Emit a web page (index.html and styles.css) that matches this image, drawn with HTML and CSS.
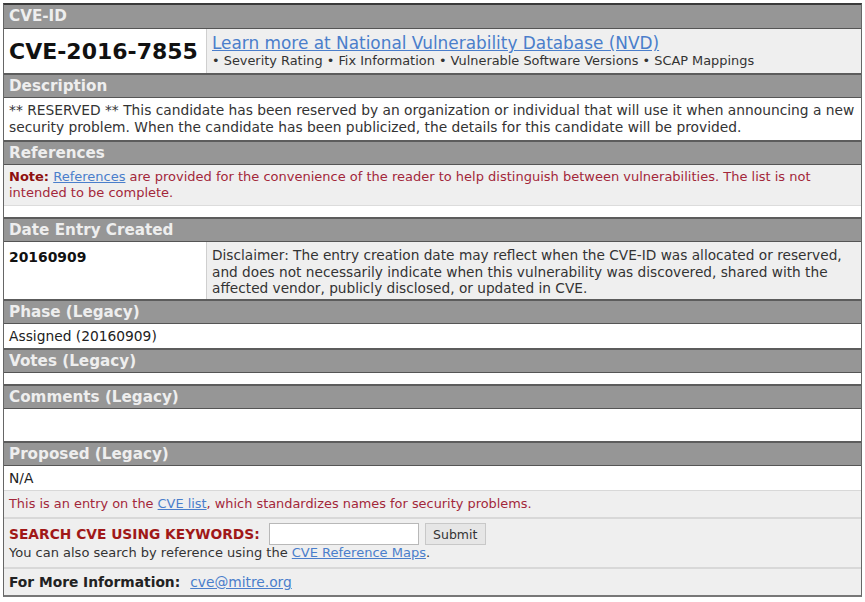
FILE: index.html
```html
<!DOCTYPE html>
<html>
<head>
<meta charset="utf-8">
<title>CVE-2016-7855</title>
<link rel="stylesheet" href="styles.css">
</head>
<body>
<div class="box">
  <div class="hdr first">CVE-ID</div>
  <div class="split idrow">
    <div class="cell-l white"><span class="cveid">CVE-2016-7855</span></div>
    <div class="cell-r gray">
      <a class="nvd" href="#">Learn more at National Vulnerability Database (NVD)</a>
      <div class="bullets">• Severity Rating • Fix Information • Vulnerable Software Versions • SCAP Mappings</div>
    </div>
  </div>

  <div class="hdr">Description</div>
  <div class="body white desc">** RESERVED ** This candidate has been reserved by an organization or individual that will use it when announcing a new security problem. When the candidate has been publicized, the details for this candidate will be provided.</div>

  <div class="hdr">References</div>
  <div class="body gray note"><b>Note:</b> <a href="#">References</a> are provided for the convenience of the reader to help distinguish between vulnerabilities. The list is not intended to be complete.</div>
  <div class="spacer white"></div>

  <div class="hdr">Date Entry Created</div>
  <div class="split daterow">
    <div class="cell-l white"><b class="date">20160909</b></div>
    <div class="cell-r gray disclaimer">Disclaimer: The entry creation date may reflect when the CVE-ID was allocated or reserved, and does not necessarily indicate when this vulnerability was discovered, shared with the affected vendor, publicly disclosed, or updated in CVE.</div>
  </div>

  <div class="hdr">Phase (Legacy)</div>
  <div class="body white line">Assigned (20160909)</div>

  <div class="hdr">Votes (Legacy)</div>
  <div class="blank-s white"></div>

  <div class="hdr">Comments (Legacy)</div>
  <div class="blank-l white"></div>

  <div class="hdr">Proposed (Legacy)</div>
  <div class="body white line">N/A</div>

  <div class="body gray foot-note">This is an entry on the <a href="#">CVE list</a>, which standardizes names for security problems.</div>

  <div class="body gray search">
    <div class="search-row">
      <span class="search-label">SEARCH CVE USING KEYWORDS:</span>
      <input class="search-input" type="text">
      <button class="submit" type="button">Submit</button>
    </div>
    <div class="search-sub">You can also search by reference using the <a href="#">CVE Reference Maps</a>.</div>
  </div>

  <div class="body gray more"><b>For More Information:</b><a class="mail" href="#">cve@mitre.org</a></div>
</div>
</body>
</html>
```

FILE: styles.css
```css
html, body {
  margin: 0;
  padding: 0;
  background: #ffffff;
}
body {
  padding: 3px 3px 0 3px;
  font-family: "DejaVu Sans", Verdana, sans-serif;
  color: #222;
}
* { box-sizing: border-box; }
a {
  color: #4a7ecb;
  text-decoration: underline;
}
.box {
  width: 859px;
  border: 1px solid #666;
  border-top: 2px solid #3a3a3a;
  border-bottom: 2px solid #777;
  display: flex;
  flex-direction: column;
}
.hdr {
  background: #969696;
  color: #eeeeee;
  font-weight: bold;
  font-size: 15.2px;
  line-height: 22px;
  padding: 0 5px;
  border-top: 2px solid #5c5c5c;
}
.hdr.first {
  border-top: none;
  line-height: 23px;
}
.white { background: #ffffff; }
.gray { background: #efefef; }

.split {
  display: flex;
  border-top: 1px solid #555;
}
.cell-l {
  width: 203px;
  flex: none;
  padding: 0 5px;
  border-right: 1px solid #cfcfcf;
}
.cell-r {
  flex: 1;
  padding: 0 5px;
}
.idrow { height: 45px; }
.idrow .cell-l {
  display: flex;
  align-items: center;
}
.cveid {
  font-size: 22px;
  font-weight: bold;
  color: #111;
}
.idrow .cell-r {
  padding-top: 5px;
}
.nvd {
  font-size: 16.9px;
  line-height: 19px;
  display: block;
}
.bullets {
  font-size: 12.9px;
  line-height: 15px;
  color: #333;
}
.body {
  padding: 0 5px;
  border-top: 1px solid #555;
}
.desc {
  font-size: 13.8px;
  line-height: 17px;
  padding-top: 4px;
  padding-bottom: 4px;
  color: #333;
}
.note {
  font-size: 13px;
  line-height: 16px;
  padding-top: 4px;
  padding-bottom: 4px;
  color: #a3273a;
  border-bottom: 1px solid #dcdcdc;
}
.note b { color: #8e1010; }
.spacer { height: 11px; }
.daterow { height: 58px; }
.daterow .cell-l { padding-top: 5px; }
.date {
  font-size: 13.9px;
  color: #111;
}
.disclaimer {
  font-size: 13.7px;
  line-height: 16.5px;
  padding-top: 5px;
  color: #333;
}
.line {
  font-size: 13.8px;
  line-height: 24px;
  color: #222;
}
.blank-s { height: 12px; border-top: 1px solid #555; }
.blank-l { height: 33px; border-top: 1px solid #555; }
.foot-note {
  font-size: 12.9px;
  line-height: 26px;
  color: #a3273a;
  border-top: 1px solid #d8d8d8;
}
.search {
  border-top: 2px solid #d8d8d8;
  padding-top: 4px;
  padding-bottom: 5px;
  height: 50px;
}
.search-row {
  display: flex;
  align-items: center;
  gap: 6px;
}
.search-label {
  font-size: 13.8px;
  font-weight: bold;
  color: #a01818;
  margin-right: 3px;
}
.search-input {
  width: 150px;
  height: 22px;
  border: 1px solid #b8b8b8;
  background: #fff;
  padding: 1px 2px;
  margin: 0;
}
.submit {
  font-family: "DejaVu Sans", Verdana, sans-serif;
  font-size: 12.5px;
  height: 22px;
  width: 61px;
  padding: 0;
  border: 1px solid #c8c8c8;
  background: #e6e6e6;
  color: #333;
  margin: 0;
}
.search-sub {
  font-size: 13px;
  line-height: 16px;
  color: #333;
  margin-top: 0;
}
.more {
  font-size: 13.8px;
  line-height: 26px;
  color: #222;
  border-top: 2px solid #d8d8d8;
}
.more b { color: #222; }
.mail { margin-left: 10px; }
```
